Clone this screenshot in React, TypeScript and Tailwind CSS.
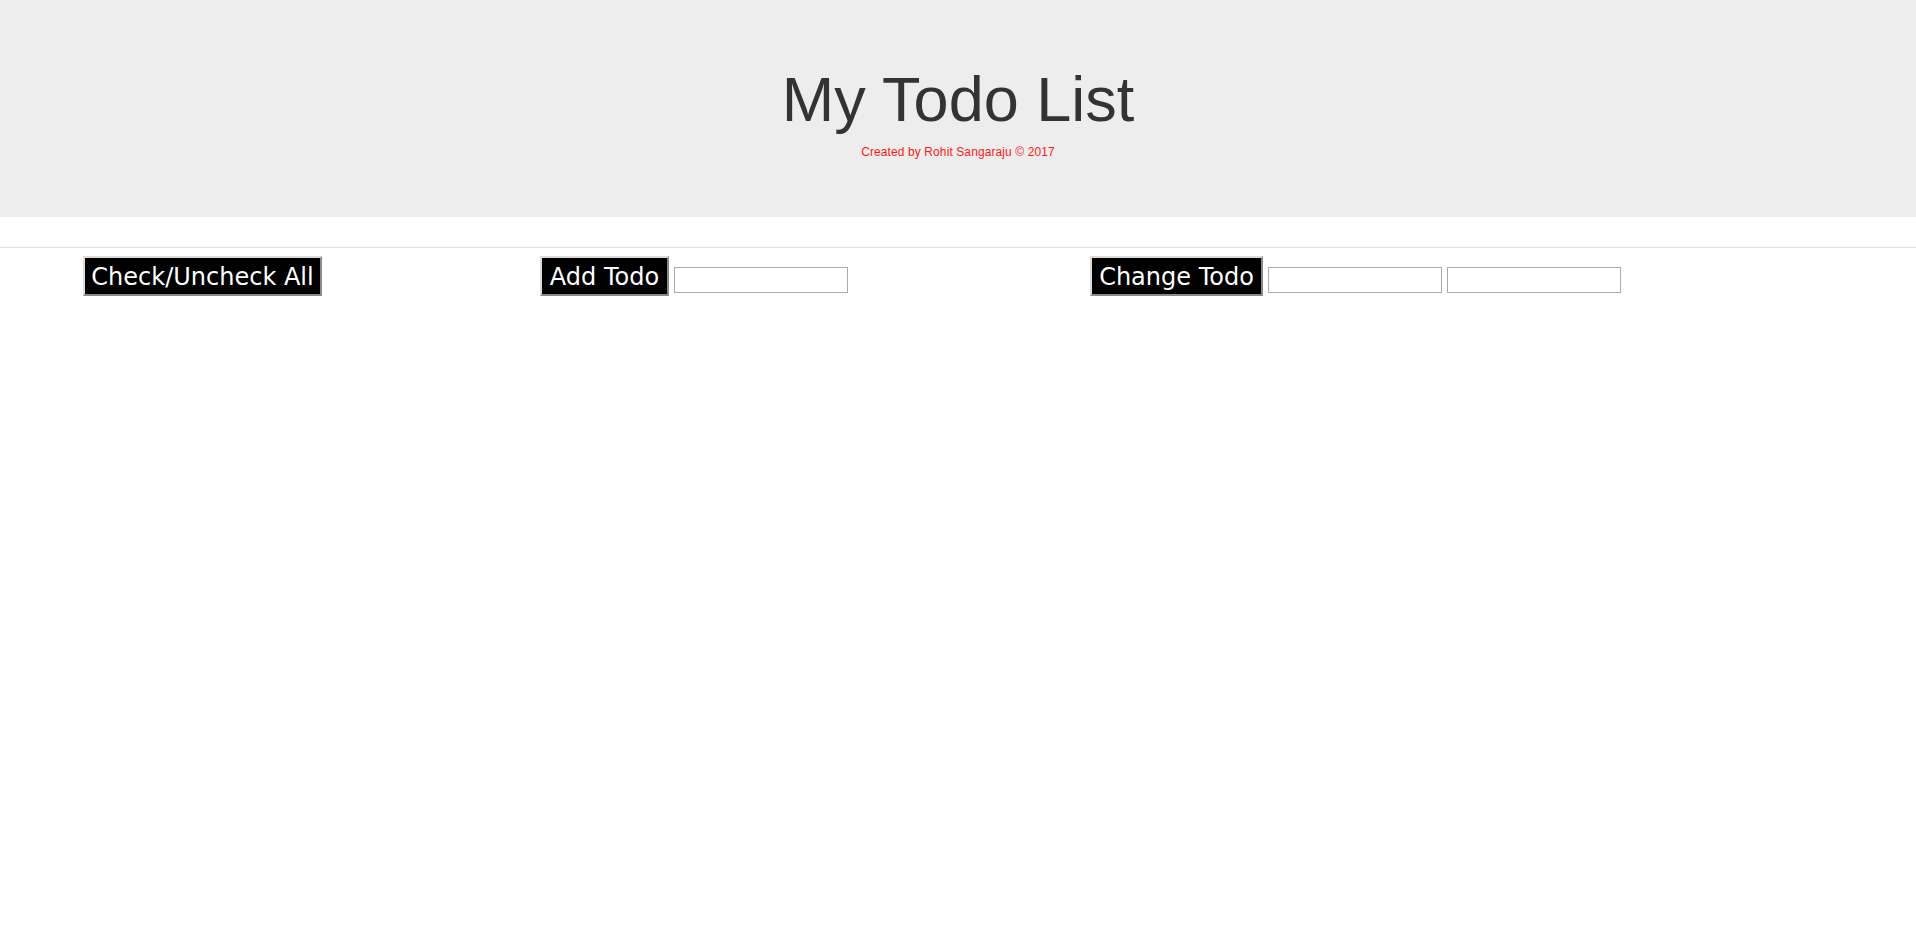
const btn =
  "border-2 border-t-[#dcdcdc] border-l-[#dcdcdc] border-b-[#8a8a8a] border-r-[#8a8a8a] bg-black pt-[5px] pb-[3px] text-center text-[24px] leading-[28px] text-white font-['DejaVu_Sans',Verdana,sans-serif]";

const field = "mt-[11px] h-[26px] w-[174px] border border-[#aaaaaa] bg-white";

export default function App() {
  return (
    <div className="min-h-[931px] bg-white font-['Liberation_Sans',Arial,sans-serif]">
      {/* Header */}
      <header className="flex h-[217px] flex-col items-center bg-[#ededed] pt-[68px]">
        <h1 className="text-[63px] leading-none text-[#333333]">My Todo List</h1>
        <p className="mt-[15px] text-[12px] leading-none tracking-[0.1px] text-[#ff1a1a]">
          Created by Rohit Sangaraju © 2017
        </p>
      </header>

      {/* Controls */}
      <div className="mt-[30px] border-t border-[#dddddd] pt-[8px]">
        <div className="flex items-start pl-[83px]">
          <div className="w-[457px]">
            <button type="button" className={`${btn} w-[239px]`}>
              Check/Uncheck All
            </button>
          </div>

          <div className="flex w-[550px] items-start gap-[5px]">
            <button type="button" className={`${btn} w-[129px]`}>
              Add Todo
            </button>
            <input type="text" className={field} />
          </div>

          <div className="flex items-start gap-[5px]">
            <button type="button" className={`${btn} w-[173px]`}>
              Change Todo
            </button>
            <input type="text" className={field} />
            <input type="text" className={field} />
          </div>
        </div>
      </div>
    </div>
  );
}
